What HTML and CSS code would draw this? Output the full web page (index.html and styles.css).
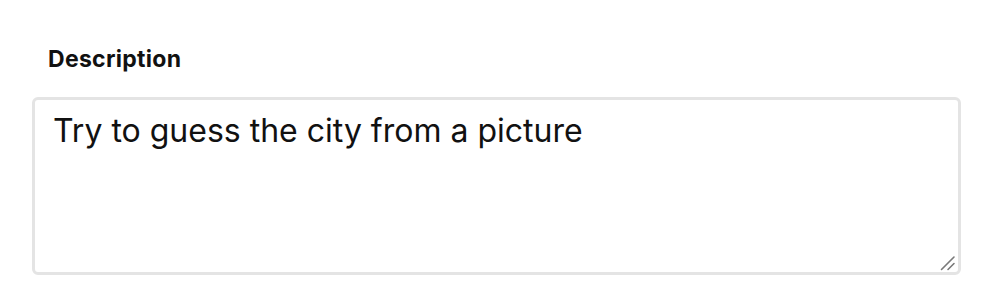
FILE: index.html
```html
<!DOCTYPE html>
<html>
<head>
<meta charset="utf-8">
<link rel="stylesheet" href="styles.css">
</head>
<body>
<div class="field">
  <label class="label" for="desc">Description</label>
  <div class="input-wrap">
    <textarea id="desc" class="input">Try to guess the city from a picture</textarea>
    <svg class="grip" width="16" height="16" viewBox="0 0 16 16" aria-hidden="true">
      <line x1="1.5" y1="14.5" x2="14" y2="2" stroke="#7a7a7a" stroke-width="1.6" stroke-linecap="round"/>
      <line x1="8" y1="14.5" x2="14" y2="8.5" stroke="#7a7a7a" stroke-width="1.6" stroke-linecap="round"/>
    </svg>
  </div>
</div>
</body>
</html>
```
FILE: styles.css
```css
html, body {
  margin: 0;
  padding: 0;
  background: #ffffff;
}
body {
  font-family: Inter, "Noto Sans", sans-serif;
  color: #111111;
}
.field {
  display: flex;
  flex-direction: column;
  align-items: flex-start;
  padding: 45px 0 0 32px;
  gap: 24px;
}
.label {
  font-size: 23px;
  font-weight: 700;
  line-height: 28px;
  letter-spacing: 0.3px;
  padding-left: 16px;
  color: #111;
}
.input-wrap {
  position: relative;
  width: 929px;
  height: 178px;
}
.input {
  display: block;
  box-sizing: border-box;
  width: 100%;
  height: 100%;
  margin: 0;
  border: 3px solid #e4e4e4;
  border-radius: 6px;
  padding: 11px 18px;
  font-family: Inter, "Noto Sans", sans-serif;
  font-size: 32px;
  line-height: 40px;
  color: #111;
  resize: none;
  outline: none;
  background: #fff;
}
.grip {
  position: absolute;
  right: 5px;
  bottom: 4px;
  pointer-events: none;
}
```
